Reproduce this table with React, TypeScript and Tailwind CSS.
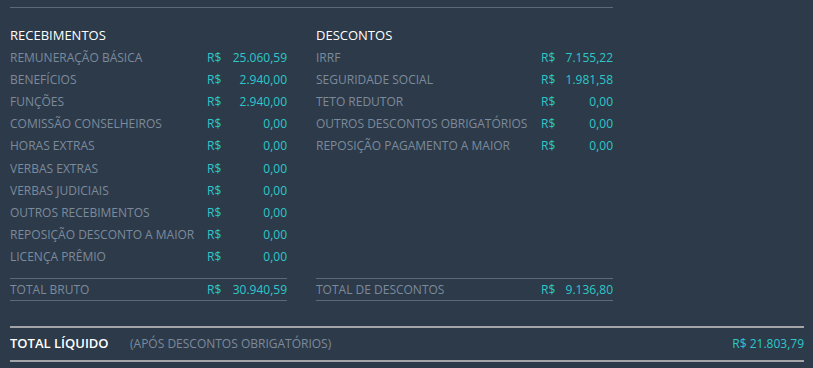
const recebimentos: [string, string][] = [
  ['REMUNERAÇÃO BÁSICA', '25.060,59'],
  ['BENEFÍCIOS', '2.940,00'],
  ['FUNÇÕES', '2.940,00'],
  ['COMISSÃO CONSELHEIROS', '0,00'],
  ['HORAS EXTRAS', '0,00'],
  ['VERBAS EXTRAS', '0,00'],
  ['VERBAS JUDICIAIS', '0,00'],
  ['OUTROS RECEBIMENTOS', '0,00'],
  ['REPOSIÇÃO DESCONTO A MAIOR', '0,00'],
  ['LICENÇA PRÊMIO', '0,00'],
];

const descontos: [string, string][] = [
  ['IRRF', '7.155,22'],
  ['SEGURIDADE SOCIAL', '1.981,58'],
  ['TETO REDUTOR', '0,00'],
  ['OUTROS DESCONTOS OBRIGATÓRIOS', '0,00'],
  ['REPOSIÇÃO PAGAMENTO A MAIOR', '0,00'],
];

function Money({ value, w }: { value: string; w: string }) {
  return (
    <span className={`${w} flex justify-between text-[#2ec8c8]`}>
      <span>R$</span>
      <span>{value}</span>
    </span>
  );
}

function Column({
  title,
  rows,
  totalLabel,
  total,
  width,
  moneyW,
}: {
  title: string;
  rows: [string, string][];
  totalLabel: string;
  total: string;
  width: string;
  moneyW: string;
}) {
  return (
    <div className={`${width} flex flex-col`}>
      <div className="text-white text-[13px] h-[23px] flex items-center mt-[16px]">{title}</div>
      <div className="flex flex-col h-[221px]">
        {rows.map(([l, v]) => (
          <div key={l} className="flex items-center h-[22.1px]">
            <span className="flex-1 text-[#7d8a9b]">{l}</span>
            <Money value={v} w={moneyW} />
          </div>
        ))}
      </div>
      <div className="mt-[10px] border-t border-b border-[#5d6878] h-[23px] flex items-center">
        <span className="flex-1 text-[#7d8a9b]">{totalLabel}</span>
        <Money value={total} w={moneyW} />
      </div>
    </div>
  );
}

export default function App() {
  return (
    <div
      className="w-[813px] h-[368px] bg-[#2c3a4a] text-[12px] overflow-hidden"
      style={{ fontFamily: '"Open Sans", "Liberation Sans", sans-serif' }}
    >
      <div className="pl-[10px] pt-[7px]">
        <div className="w-[603px] border-t border-[#5d6878]" />
        <div className="flex gap-[29px]">
          <Column
            title="RECEBIMENTOS"
            rows={recebimentos}
            totalLabel="TOTAL BRUTO"
            total="30.940,59"
            width="w-[277px]"
            moneyW="w-[80px]"
          />
          <Column
            title="DESCONTOS"
            rows={descontos}
            totalLabel="TOTAL DE DESCONTOS"
            total="9.136,80"
            width="w-[297px]"
            moneyW="w-[72px]"
          />
        </div>
        <div className="mt-[25px] w-[794px] border-t-2 border-b-2 border-[#a3a5a8] h-[36px] flex items-center">
          <span className="text-white text-[13px] font-semibold w-[120px]">TOTAL LÍQUIDO</span>
          <span className="flex-1 text-[#7d8a9b]">(APÓS DESCONTOS OBRIGATÓRIOS)</span>
          <span className="text-[#2ec8c8]">R$ 21.803,79</span>
        </div>
      </div>
    </div>
  );
}
